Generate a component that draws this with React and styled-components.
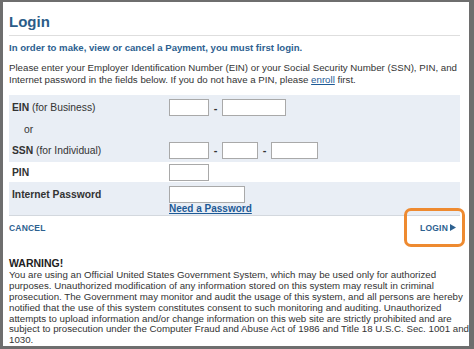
import React from "react";
import styled, { createGlobalStyle } from "styled-components";

const Global = createGlobalStyle`
  html, body { margin: 0; padding: 0; background: #fff; }
  body { font-family: "Liberation Sans", Arial, sans-serif; color: #333; }
`;

const Frame = styled.div`
  width: 474px;
  height: 349px;
  box-sizing: border-box;
  border-style: solid;
  border-color: #6e6e6e;
  border-width: 2px 5px 3px 3px;
  background: #fff;
  padding: 10px 9px 0 6px;
  overflow: hidden;
  display: flex;
  flex-direction: column;
`;

const Title = styled.h1`
  margin: 0;
  font-size: 15px;
  line-height: 20px;
  font-weight: bold;
  color: #2b5c88;
  padding-bottom: 3px;
  border-bottom: 1px solid #dedede;
`;

const Intro = styled.p`
  margin: 6px 0 0;
  font-size: 9.6px;
  line-height: 12px;
  font-weight: bold;
  color: #2d6190;
  white-space: nowrap;
`;

const Para = styled.p`
  margin: ${(p) => p.$mt || 0}px 0 0;
  font-size: 9.7px;
  line-height: ${(p) => p.$lh || 12}px;
  color: #333;
  white-space: nowrap;
`;

const Link = styled.a`
  color: #1d5a96;
  text-decoration: underline;
  font-weight: ${(p) => (p.$bold ? "bold" : "normal")};
  font-size: ${(p) => (p.$bold ? "10px" : "inherit")};
  line-height: ${(p) => (p.$bold ? "11px" : "inherit")};
  cursor: pointer;
`;

const Form = styled.div`
  margin-top: 9px;
  display: flex;
  flex-direction: column;
  border-bottom: 1px solid #d3d8de;
`;

const Row = styled.div`
  display: grid;
  grid-template-columns: 160px 1fr;
  align-items: ${(p) => p.$align || "center"};
  height: ${(p) => p.$h}px;
  box-sizing: border-box;
  padding-top: ${(p) => p.$pt || 0}px;
  background: ${(p) => (p.$shade ? "#e9eef5" : "#fff")};
`;

const Label = styled.div`
  font-size: 10.3px;
  line-height: 17px;
  color: #333;
  padding-left: ${(p) => p.$indent || 3}px;
  white-space: nowrap;
  b { font-weight: bold; }
`;

const Fields = styled.div`
  display: flex;
  flex-direction: column;
  align-items: flex-start;
`;

const Inline = styled.div`
  display: flex;
  align-items: center;
`;

const Input = styled.input`
  width: ${(p) => p.$w}px;
  height: 17px;
  box-sizing: border-box;
  border: 1px solid #a9a9a9;
  background: #fff;
  margin: 0;
  padding: 0 2px;
  font: inherit;
  font-size: 10px;
`;

const Dash = styled.span`
  width: 13px;
  text-align: center;
  font-size: 11px;
  font-weight: bold;
  color: #333;
`;

const Footer = styled.div`
  height: 24px;
  display: flex;
  align-items: center;
  justify-content: space-between;
  padding-right: 4px;
`;

const Action = styled.a`
  position: relative;
  font-size: 8.5px;
  font-weight: bold;
  color: #2d6190;
  letter-spacing: 0.2px;
  text-decoration: none;
  cursor: pointer;
  display: flex;
  align-items: center;
  gap: 2px;
`;

const Highlight = styled.span`
  position: absolute;
  top: -15px;
  bottom: -14px;
  left: -16px;
  right: -9px;
  border: 3px solid #ee8a30;
  border-radius: 7px;
  pointer-events: none;
`;

const Arrow = styled.svg`
  width: 6px;
  height: 7px;
  fill: #2d6190;
`;

const WarnTitle = styled.h2`
  margin: 18px 0 0;
  font-size: 10.5px;
  line-height: 12px;
  font-weight: bold;
  color: #222;
`;

export default function App() {
  return (
    <>
      <Global />
      <Frame>
        <Title>Login</Title>
        <Intro>In order to make, view or cancel a Payment, you must first login.</Intro>
        <Para $mt={8}>
          Please enter your Employer Identification Number (EIN) or your Social Security Number (SSN), PIN, and
          <br />
          Internet password in the fields below. If you do not have a PIN, please <Link>enroll</Link> first.
        </Para>

        <Form>
          <Row $shade $h={25}>
            <Label><b>EIN</b> (for Business)</Label>
            <Inline>
              <Input $w={40} />
              <Dash>-</Dash>
              <Input $w={64} />
            </Inline>
          </Row>
          <Row $shade $h={18}>
            <Label $indent={15}>or</Label>
            <div />
          </Row>
          <Row $shade $h={24}>
            <Label><b>SSN</b> (for Individual)</Label>
            <Inline>
              <Input $w={40} />
              <Dash>-</Dash>
              <Input $w={36} />
              <Dash>-</Dash>
              <Input $w={47} />
            </Inline>
          </Row>
          <Row $h={20}>
            <Label><b>PIN</b></Label>
            <Inline>
              <Input $w={40} />
            </Inline>
          </Row>
          <Row $shade $h={33} $align="start" $pt={4}>
            <Label><b>Internet Password</b></Label>
            <Fields>
              <Input $w={76} type="password" />
              <Link $bold>Need a Password</Link>
            </Fields>
          </Row>
        </Form>

        <Footer>
          <Action>CANCEL</Action>
          <Action>
            LOGIN
            <Arrow viewBox="0 0 6 7"><path d="M0 0 L6 3.5 L0 7 Z" /></Arrow>
            <Highlight />
          </Action>
        </Footer>

        <WarnTitle>WARNING!</WarnTitle>
        <Para $mt={1} $lh={10.8}>
          You are using an Official United States Government System, which may be used only for authorized
          <br />
          purposes. Unauthorized modification of any information stored on this system may result in criminal
          <br />
          prosecution. The Government may monitor and audit the usage of this system, and all persons are hereby
          <br />
          notified that the use of this system constitutes consent to such monitoring and auditing. Unauthorized
          <br />
          attempts to upload information and/or change information on this web site are strictly prohibited and are
          <br />
          subject to prosecution under the Computer Fraud and Abuse Act of 1986 and Title 18 U.S.C. Sec. 1001 and
          <br />
          1030.
        </Para>
      </Frame>
    </>
  );
}
